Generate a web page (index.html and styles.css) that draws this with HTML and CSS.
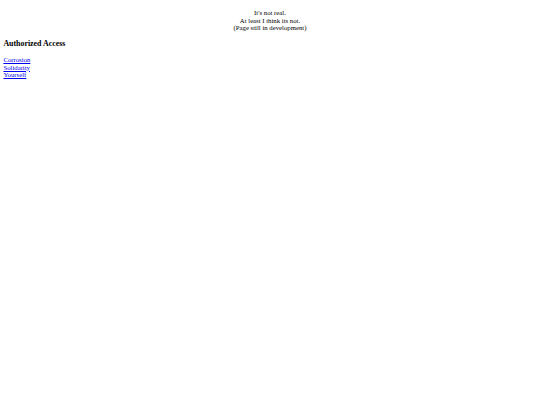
FILE: index.html
```html
<!DOCTYPE html>
<html>
<head>
<meta charset="utf-8">
<title>Authorized Access</title>
<link rel="stylesheet" href="styles.css">
</head>
<body>
<p class="notice">It's not real.<br>At least I think its not.<br>(Page still in development)</p>
<h3 class="title">Authorized Access</h3>
<p class="links">
<a href="#">Corrosion</a><br>
<a href="#">Solidarity</a><br>
<a href="#">Yourself</a>
</p>
</body>
</html>
```
FILE: styles.css
```css
html {
  background: #ffffff;
}
body {
  margin: 3.375px;
  font-family: "Liberation Serif", "Times New Roman", serif;
  font-size: 6.75px;
  line-height: 7.6px;
  color: #000000;
}
.notice {
  margin: 5.7px 0 6.75px;
  text-align: center;
}
.title {
  font-size: 7.9px;
  line-height: 8.86px;
  font-weight: bold;
  margin: 8px 0 7.6px;
}
.links {
  margin: 6.75px 0;
}
.links a {
  color: #0000ee;
  text-decoration: underline;
}
```
